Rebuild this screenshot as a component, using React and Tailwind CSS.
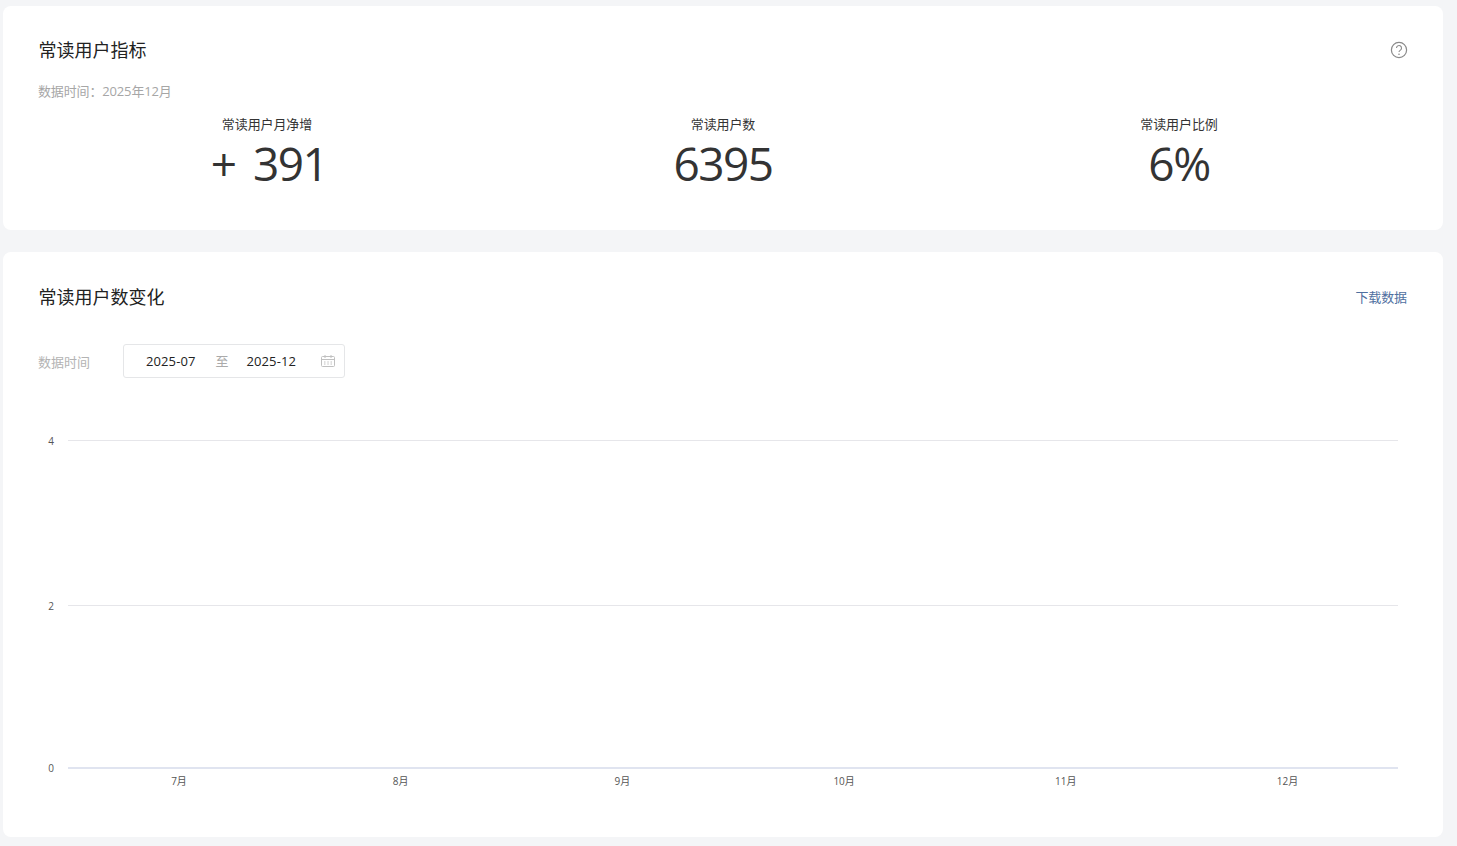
const FONT = "font-['Open_Sans','Noto_Sans_CJK_SC',sans-serif]";

const stats = [
  { label: '常读用户月净增', value: '+ 391', nudge: 'ml-[4px]' },
  { label: '常读用户数', value: '6395', nudge: '' },
  { label: '常读用户比例', value: '6%', nudge: '' },
];

const yTicks = [
  { label: '4', y: 440.5 },
  { label: '2', y: 605.5 },
];

const months = ['7月', '8月', '9月', '10月', '11月', '12月'];

function HelpIcon() {
  return (
    <svg width="18" height="18" viewBox="0 0 18 18" fill="none" className="text-[#8a8a8a]">
      <circle cx="9" cy="9" r="7.6" stroke="currentColor" strokeWidth="1.2" />
      <path d="M6.5 7a2.5 2.5 0 1 1 3.9 2.1c-.9.6-1.4 1-1.4 2" stroke="currentColor" strokeWidth="1.1" />
      <circle cx="9" cy="13.2" r=".8" fill="currentColor" />
    </svg>
  );
}

function CalendarIcon() {
  return (
    <svg width="14" height="12" viewBox="0 0 14 12" fill="none" className="text-[#c0c0c0]">
      <rect x=".5" y="1.5" width="13" height="10" rx="1" stroke="currentColor" />
      <path d="M.5 4.5h13M4 0v3M10 0v3M3 7h1.5M6.3 7h1.5M9.5 7H11M3 9h1.5M6.3 9h1.5M9.5 9H11" stroke="currentColor" />
    </svg>
  );
}

function Chart() {
  return (
    <svg width="1368" height="410" viewBox="0 0 1368 410" className="block">
      {yTicks.map((t) => (
        <g key={t.label}>
          <line x1="29" x2="1359" y1={t.y - 400} y2={t.y - 400} stroke="#e6e6ea" />
          <text x="12" y={t.y - 396} textAnchor="middle" fontSize="10" fill="#555">{t.label}</text>
        </g>
      ))}
      <line x1="29" x2="1359" y1="368" y2="368" stroke="#e0e4f0" strokeWidth="2" />
      <text x="12" y="371.5" textAnchor="middle" fontSize="10" fill="#555">0</text>
      {months.map((m, i) => (
        <text key={m} x={140 + i * 221.7} y="385" textAnchor="middle" fontSize="10" fill="#555">{m}</text>
      ))}
    </svg>
  );
}

export default function App() {
  return (
    <div className={`${FONT} min-h-screen bg-[#f4f5f7] pt-[6px] pb-[9px] pl-[3px] pr-[14px] flex flex-col gap-[22px]`}>
      <section className="h-[224px] rounded-lg bg-white px-9 pt-[32px]">
        <div className="flex items-center justify-between h-6">
          <h2 className="text-[18px] leading-6 text-[#222] ml-[-0.5px]">常读用户指标</h2>
          <div className="mr-[-1px]"><HelpIcon /></div>
        </div>
        <p className="mt-[19px] text-[13px] leading-[20px] text-[#a6a6a6] tracking-[-0.15px] ml-[-1px]">数据时间：2025年12月</p>
        <div className="grid grid-cols-3 mt-[15px] text-center">
          {stats.map((s) => (
            <div key={s.label}>
              <div className="text-[13px] leading-[16px] text-[#333] tracking-[-0.1px]">{s.label}</div>
              <div className={`text-[46px] leading-[63px] text-[#333] tracking-[-1.5px] [word-spacing:7px] ${s.nudge}`}>{s.value}</div>
            </div>
          ))}
        </div>
      </section>

      <section className="flex-1 h-[585px] rounded-lg bg-white px-9 pt-[33px]">
        <div className="flex items-center justify-between h-6">
          <h2 className="text-[18px] leading-6 text-[#222] ml-[-0.5px]">常读用户数变化</h2>
          <a className="text-[13px] text-[#4f6f9f] pt-[1px] tracking-[-0.1px]">下载数据</a>
        </div>
        <div className="flex items-center mt-[35px]">
          <span className="w-[84px] text-[13px] text-[#b3b3b3] pt-[4px] ml-[-1px] mr-[1px]">数据时间</span>
          <div className="flex items-center w-[222px] h-[34px] rounded-[3px] border border-[#e5e6e8] pl-[22px] text-[13px] text-[#222]">
            <span className="pt-[1px] tracking-[0.1px]">2025-07</span>
            <span className="ml-[20px] text-[#aaa] pt-[1px]">至</span>
            <span className="ml-[18px] pt-[1px] tracking-[0.1px]">2025-12</span>
            <span className="ml-auto mr-[9px]"><CalendarIcon /></span>
          </div>
        </div>
        <div className="mt-[22px]"><Chart /></div>
      </section>
    </div>
  );
}
